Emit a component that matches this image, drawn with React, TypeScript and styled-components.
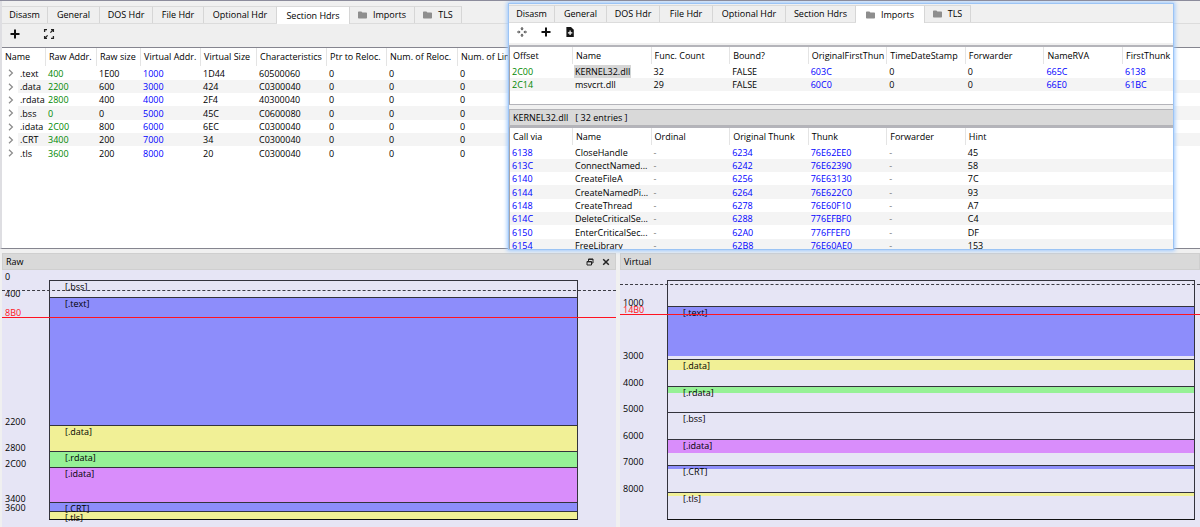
import React from "react";
import styled, { createGlobalStyle, css } from "styled-components";

const GlobalStyle = createGlobalStyle`
  * { box-sizing: border-box; }
  body {
    margin: 0;
    background: #f0f0f0;
    color: #000;
    font: 9px/12px "Open Sans", "Noto Sans", sans-serif;
  }
  button { font: inherit; color: inherit; border: 0; padding: 0; background: none; }
`;

const GREEN = "#008800";
const BLUE = "#0000ff";

/* ---------- shell ---------- */

const Shell = styled.div`
  position: relative;
  display: flex;
  flex-direction: column;
  min-height: 100vh;
  overflow: hidden;
  border-top: 1px solid #8c8c9c;
`;

const MainPane = styled.section`
  display: flex;
  flex-direction: column;
  height: 248px;
  padding-top: 5px;
  border-left: 2px solid #dedee2;
  border-bottom: 1px solid #85858f;
`;

const FloatingWindow = styled.section`
  position: absolute;
  top: 2px;
  left: 508px;
  right: 26px;
  height: 247px;
  display: flex;
  flex-direction: column;
  padding-top: 1px;
  overflow: hidden;
  background: #f0f0f0;
  border: 1px solid #9cc4f4;
  box-shadow: 0 0 4px 1px #9cc8ff;
`;

/* ---------- tabs ---------- */

const TabBar = styled.div`
  display: flex;
  flex: none;
  align-items: flex-end;
  height: 18px;
  border-bottom: 1px solid #dcdcdc;
`;

const TabButton = styled.button<{ $width: number; $active: boolean }>`
  display: flex;
  align-items: center;
  justify-content: center;
  gap: 6px;
  flex: none;
  width: ${(p) => p.$width}px;
  height: 17px;
  white-space: nowrap;
  background: #efefef;
  border-top: 1px solid #dadada;
  border-right: 1px solid #d6d6d6;
  ${(p) =>
    p.$active &&
    css`
      height: 18px;
      margin-bottom: -1px;
      background: #fff;
    `}
`;

const Toolbar = styled.div<{ $light?: boolean }>`
  display: flex;
  flex: none;
  align-items: center;
  gap: ${(p) => (p.$light ? 12 : 22)}px;
  height: ${(p) => (p.$light ? 20 : 23)}px;
  padding: ${(p) => (p.$light ? "0 0 2px 7px" : "0 0 4px 7px")};
  background: ${(p) => (p.$light ? "#fff" : "#efefef")};
`;

const ToolButton = styled.button`
  display: flex;
  width: 12px;
  height: 12px;
  svg { width: 12px; height: 12px; }
`;

const FolderIcon = () => (
  <svg width="9" height="8" viewBox="0 0 9 8" aria-hidden="true">
    <path d="M0 1.2Q0 .4.8.4H3.4L4.4 1.4H8.2Q9 1.4 9 2.2V6.8Q9 7.6 8.2 7.6H.8Q0 7.6 0 6.8Z" fill="#8e8e8e" />
  </svg>
);

const PlusIcon = () => (
  <svg viewBox="0 0 12 12" aria-hidden="true">
    <path d="M6 1.5V10.5M1.5 6H10.5" stroke="#111" strokeWidth="2" />
  </svg>
);

const ExpandIcon = () => (
  <svg viewBox="0 0 12 12" fill="none" stroke="#222" strokeWidth="1.3" aria-hidden="true">
    <path d="M1.6 4V1.6H4M8 1.6H10.4V4M10.4 8V10.4H8M4 10.4H1.6V8" />
    <path d="M7.4 4.6L10 2M4.6 7.4L2 10" />
  </svg>
);

const CollapseIcon = () => (
  <svg viewBox="0 0 12 12" aria-hidden="true">
    <g fill="#555">
      <path d="M4.2 2.6H7.8L6 4.6ZM4.2 9.4H7.8L6 7.4ZM2.6 4.2V7.8L4.6 6ZM9.4 4.2V7.8L7.4 6Z" />
      <path d="M5.4 1H6.6V3H5.4ZM5.4 9H6.6V11H5.4ZM1 5.4H3V6.6H1ZM9 5.4H11V6.6H9Z" />
    </g>
  </svg>
);

const FilePlusIcon = () => (
  <svg viewBox="0 0 12 12" aria-hidden="true">
    <path d="M2.4 1H7L9.8 3.8V11H2.4Z" fill="#151515" />
    <path d="M6.1 4.6V9M3.9 6.8H8.3" stroke="#fff" strokeWidth="1.2" />
  </svg>
);

type TabDef = { label: string; width: number; folder?: boolean };

const mainTabs: TabDef[] = [
  { label: "Disasm", width: 46 },
  { label: "General", width: 52 },
  { label: "DOS Hdr", width: 53 },
  { label: "File Hdr", width: 51 },
  { label: "Optional Hdr", width: 73 },
  { label: "Section Hdrs", width: 73 },
  { label: "Imports", width: 65, folder: true },
  { label: "TLS", width: 47, folder: true },
];

const importTabs: TabDef[] = [
  { label: "Disasm", width: 46 },
  { label: "General", width: 52 },
  { label: "DOS Hdr", width: 53 },
  { label: "File Hdr", width: 53 },
  { label: "Optional Hdr", width: 73 },
  { label: "Section Hdrs", width: 70 },
  { label: "Imports", width: 69, folder: true },
  { label: "TLS", width: 46, folder: true },
];

const Tabs = ({ tabs, active }: { tabs: TabDef[]; active: string }) => (
  <TabBar role="tablist">
    {tabs.map((t) => (
      <TabButton key={t.label} role="tab" aria-selected={t.label === active} $width={t.width} $active={t.label === active}>
        {t.folder && <FolderIcon />}
        {t.label}
      </TabButton>
    ))}
  </TabBar>
);

/* ---------- tables ---------- */

const TableFrame = styled.div<{ $height?: number }>`
  flex: ${(p) => (p.$height ? "none" : "1")};
  height: ${(p) => (p.$height ? `${p.$height}px` : "auto")};
  min-height: 0;
  overflow: hidden;
  background: #fff;
  border-top: 1px solid #85858f;
`;

const Table = styled.table`
  width: 100%;
  table-layout: fixed;
  border-collapse: separate;
  border-spacing: 0;
`;

const HeadCell = styled.th`
  height: 18px;
  padding: 0 0 0 3px;
  font-weight: 400;
  text-align: left;
  white-space: nowrap;
  overflow: hidden;
  border-right: 1px solid #e4e4e4;
  &:last-child { border-right: 0; }
`;

const ImportFrame = styled(TableFrame)`
  border-top: 2px solid #b4b4ba;
  border-left: 1px solid #a4a4aa;
  ${(p) => p.$height && css`border-bottom: 1px solid #b4b4ba;`}
  ${HeadCell} { height: 17px; }
`;

const Row = styled.tr`
  height: 13px;
  &:nth-child(3n + 1) { height: 14px; }
  &:nth-child(even) td { background: #f4f4f4; }
  &:nth-child(even) td[data-branch] { background: #fff; }
`;

const Cell = styled.td<{ $color?: string }>`
  padding: 0 0 0 2px;
  white-space: nowrap;
  line-height: 13px;
  color: ${(p) => p.$color ?? "inherit"};
`;

const Selected = styled.span`
  display: inline-block;
  height: 13px;
  margin-left: -1px;
  padding: 0 1px;
  background: #d6d6d6;
`;

const Expander = styled.button`
  display: flex;
  margin-left: 4px;
`;

const sectionWidths = [16, 28, 51, 44, 60, 56, 70, 60, 71];
const sectionHeads = ["Raw Addr.", "Raw size", "Virtual Addr.", "Virtual Size", "Characteristics", "Ptr to Reloc.", "Num. of Reloc.", "Num. of Linenum."];
const sectionRows = [
  [".text", "400", "1E00", "1000", "1D44", "60500060", "0", "0", "0"],
  [".data", "2200", "600", "3000", "424", "C0300040", "0", "0", "0"],
  [".rdata", "2800", "400", "4000", "2F4", "40300040", "0", "0", "0"],
  [".bss", "0", "0", "5000", "45C", "C0600080", "0", "0", "0"],
  [".idata", "2C00", "800", "6000", "6EC", "C0300040", "0", "0", "0"],
  [".CRT", "3400", "200", "7000", "34", "C0300040", "0", "0", "0"],
  [".tls", "3600", "200", "8000", "20", "C0300040", "0", "0", "0"],
];
const sectionColors: Record<number, string> = { 1: GREEN, 3: BLUE };

const SectionTable = () => (
  <Table>
    <colgroup>
      {sectionWidths.map((w, i) => <col key={i} width={w} />)}
      <col />
    </colgroup>
    <thead>
      <tr>
        <HeadCell colSpan={2}>Name</HeadCell>
        {sectionHeads.map((h) => <HeadCell key={h}>{h}</HeadCell>)}
      </tr>
    </thead>
    <tbody>
      {sectionRows.map((row) => (
        <Row key={row[0]}>
          <Cell data-branch>
            <Expander aria-label={`Expand ${row[0]}`}>
              <svg width="6" height="8" viewBox="0 0 6 8" fill="none" stroke="#8a8a8a" strokeWidth="1.2">
                <path d="M1 .8L4.4 4L1 7.2" />
              </svg>
            </Expander>
          </Cell>
          {row.map((v, i) => <Cell key={i} $color={sectionColors[i]}>{v}</Cell>)}
        </Row>
      ))}
    </tbody>
  </Table>
);

type ImportTableProps = { heads: string[]; rows: string[][]; colors: Record<number, string>; selected?: string };

const ImportTable = ({ heads, rows, colors, selected }: ImportTableProps) => (
  <Table>
    <colgroup>
      <col width={63} />
      {heads.slice(2).map((h, i) => <col key={i} />)}
      <col width={50} />
    </colgroup>
    <thead>
      <tr>{heads.map((h, i) => <HeadCell key={i}>{h}</HeadCell>)}</tr>
    </thead>
    <tbody>
      {rows.map((row) => (
        <Row key={row[0]}>
          {row.map((v, i) => (
            <Cell key={i} $color={v === "-" ? "#777" : colors[i]}>
              {v && v === selected ? <Selected>{v}</Selected> : v}
            </Cell>
          ))}
        </Row>
      ))}
    </tbody>
  </Table>
);

const libraryHeads = ["Offset", "Name", "Func. Count", "Bound?", "OriginalFirstThun", "TimeDateStamp", "Forwarder", "NameRVA", "FirstThunk"];
const libraryRows = [
  ["2C00", "KERNEL32.dll", "32", "FALSE", "603C", "0", "0", "665C", "6138"],
  ["2C14", "msvcrt.dll", "29", "FALSE", "60C0", "0", "0", "66E0", "61BC"],
];

const functionHeads = ["Call via", "Name", "Ordinal", "Original Thunk", "Thunk", "Forwarder", "Hint", "", ""];
const functionRows = [
  ["6138", "CloseHandle", "-", "6234", "76E62EE0", "-", "45", "", ""],
  ["613C", "ConnectNamed...", "-", "6242", "76E62390", "-", "58", "", ""],
  ["6140", "CreateFileA", "-", "6256", "76E63130", "-", "7C", "", ""],
  ["6144", "CreateNamedPi...", "-", "6264", "76E622C0", "-", "93", "", ""],
  ["6148", "CreateThread", "-", "6278", "76E60F10", "-", "A7", "", ""],
  ["614C", "DeleteCriticalSe...", "-", "6288", "776EFBF0", "-", "C4", "", ""],
  ["6150", "EnterCriticalSec...", "-", "62A0", "776FFEF0", "-", "DF", "", ""],
  ["6154", "FreeLibrary", "-", "62B8", "76E60AE0", "-", "153", "", ""],
];

const FunctionFrame = styled(ImportFrame)`
  ${HeadCell}:nth-child(n + 7) { border-right: 0; }
`;

const LibraryTitle = styled.h2`
  flex: none;
  height: 17px;
  margin: 4px 0 0;
  padding-left: 3px;
  font-size: 9px;
  font-weight: 400;
  line-height: 15px;
  white-space: pre;
  background: #d9d9d9;
  border: 1px solid #b4b4b8;
  border-right: 0;
`;

const Strip = styled.div`
  flex: none;
  height: 2px;
  background: #f0f0f0;
`;

/* ---------- section maps ---------- */

const Docks = styled.div`
  display: grid;
  grid-template-columns: 614fr 580fr;
  gap: 4px;
  flex: 1;
  padding: 4px 0 0 2px;
  background: #f0f0f0;
`;

const Dock = styled.section`
  display: flex;
  flex-direction: column;
  min-width: 0;
`;

const DockTitle = styled.header`
  display: flex;
  align-items: center;
  gap: 8px;
  height: 17px;
  padding: 0 5px 0 3px;
  background: #d9d9d9;
  border: 1px solid #cfcfcf;
`;

const DockName = styled.h2`
  flex: 1;
  margin: 0;
  font-size: 9px;
  font-weight: 400;
`;

const DockButton = styled.button`
  display: flex;
  svg { width: 8px; height: 8px; }
`;

const Chart = styled.div<{ $right: number }>`
  position: relative;
  flex: 1;
  padding: 10px ${(p) => p.$right}px 7px 3px;
  background: #e6e5f5;
`;

const Segment = styled.div<{ $height: number }>`
  display: grid;
  grid-template-columns: 44px 1fr;
  grid-template-rows: 100%;
  height: ${(p) => p.$height}px;
`;

const Address = styled.span`
  margin-top: -9px;
  height: 12px;
`;

const Block = styled.div<{ $fill: string; $size: string }>`
  border: 1px solid #33333c;
  border-bottom: 0;
  padding-left: 15px;
  background: linear-gradient(${(p) => p.$fill}, ${(p) => p.$fill}) no-repeat 0 0 / 100% ${(p) => p.$size};
  ${Segment}:last-of-type & { border-bottom: 1px solid #111; }
`;

const BlockName = styled.span`
  position: relative;
  z-index: 1;
`;

const Marker = styled.div<{ $top: number; $kind: "dashed" | "solid" }>`
  position: absolute;
  left: 0;
  right: 0;
  top: ${(p) => p.$top}px;
  padding-left: 3px;
  border-bottom: 1px ${(p) => p.$kind} ${(p) => (p.$kind === "solid" ? "#ff1420" : "#3c3c44")};
  color: #ff1420;
  line-height: 9px;
  z-index: 2;
`;

type Part = { at?: string; name?: string; height: number; color?: string; fill?: string };

const rawParts: Part[] = [
  { at: "0", name: "[.bss]", height: 17 },
  { at: "400", name: "[.text]", height: 128, color: "#8d8dfb" },
  { at: "2200", name: "[.data]", height: 26, color: "#f1f096" },
  { at: "2800", name: "[.rdata]", height: 16, color: "#96f196" },
  { at: "2C00", name: "[.idata]", height: 35, color: "#d98dfb" },
  { at: "3400", name: "[.CRT]", height: 9, color: "#8d8dfb" },
  { at: "3600", name: "[.tls]", height: 9, color: "#f1f096" },
];

const virtualParts: Part[] = [
  { height: 26 },
  { at: "1000", name: "[.text]", height: 53, color: "#8d8dfb", fill: "49px" },
  { at: "3000", name: "[.data]", height: 27, color: "#f1f096", fill: "10px" },
  { at: "4000", name: "[.rdata]", height: 26, color: "#96f196", fill: "6px" },
  { at: "5000", name: "[.bss]", height: 27 },
  { at: "6000", name: "[.idata]", height: 26, color: "#d98dfb", fill: "13px" },
  { at: "7000", name: "[.CRT]", height: 27, color: "#8d8dfb", fill: "3px" },
  { at: "8000", name: "[.tls]", height: 28, color: "#f1f096", fill: "3px" },
];

const Segments = ({ parts }: { parts: Part[] }) => (
  <div>
    {parts.map((p, i) => (
      <Segment key={i} $height={p.height}>
        <Address>{p.at}</Address>
        <Block $fill={p.color ?? "transparent"} $size={p.fill ?? "100%"}>
          <BlockName>{p.name}</BlockName>
        </Block>
      </Segment>
    ))}
  </div>
);

export default function App() {
  return (
    <>
      <GlobalStyle />
      <Shell>
        <MainPane>
          <Tabs tabs={mainTabs} active="Section Hdrs" />
          <Toolbar>
            <ToolButton aria-label="Add section"><PlusIcon /></ToolButton>
            <ToolButton aria-label="Fit view"><ExpandIcon /></ToolButton>
          </Toolbar>
          <TableFrame><SectionTable /></TableFrame>
        </MainPane>

        <Docks>
          <Dock>
            <DockTitle>
              <DockName>Raw</DockName>
              <DockButton aria-label="Float">
                <svg viewBox="0 0 8 8" fill="none" stroke="#222">
                  <path d="M2.5 3V1H7V5H5.5M2.5 1.4H7" />
                  <path d="M1 3.5H5.5V7H1ZM1 3.9H5.5" />
                </svg>
              </DockButton>
              <DockButton aria-label="Close">
                <svg viewBox="0 0 8 8" stroke="#222" strokeWidth="1.5">
                  <path d="M1.2 1.2L6.8 6.8M6.8 1.2L1.2 6.8" />
                </svg>
              </DockButton>
            </DockTitle>
            <Chart $right={38}>
              <Segments parts={rawParts} />
              <Marker $top={20} $kind="dashed" />
              <Marker $top={38} $kind="solid">8B0</Marker>
            </Chart>
          </Dock>
          <Dock>
            <DockTitle><DockName>Virtual</DockName></DockTitle>
            <Chart $right={5}>
              <Segments parts={virtualParts} />
              <Marker $top={14} $kind="dashed" />
              <Marker $top={35} $kind="solid">14B0</Marker>
            </Chart>
          </Dock>
        </Docks>

        <FloatingWindow>
          <Tabs tabs={importTabs} active="Imports" />
          <Toolbar $light>
            <ToolButton aria-label="Collapse"><CollapseIcon /></ToolButton>
            <ToolButton aria-label="Add library"><PlusIcon /></ToolButton>
            <ToolButton aria-label="Add function"><FilePlusIcon /></ToolButton>
          </Toolbar>
          <Strip />
          <ImportFrame $height={60}>
            <ImportTable heads={libraryHeads} rows={libraryRows} colors={{ 0: GREEN, 4: BLUE, 7: BLUE, 8: BLUE }} selected="KERNEL32.dll" />
          </ImportFrame>
          <LibraryTitle>{"KERNEL32.dll   [ 32 entries ]"}</LibraryTitle>
          <FunctionFrame>
            <ImportTable heads={functionHeads} rows={functionRows} colors={{ 0: BLUE, 3: BLUE, 4: BLUE }} />
          </FunctionFrame>
        </FloatingWindow>
      </Shell>
    </>
  );
}
